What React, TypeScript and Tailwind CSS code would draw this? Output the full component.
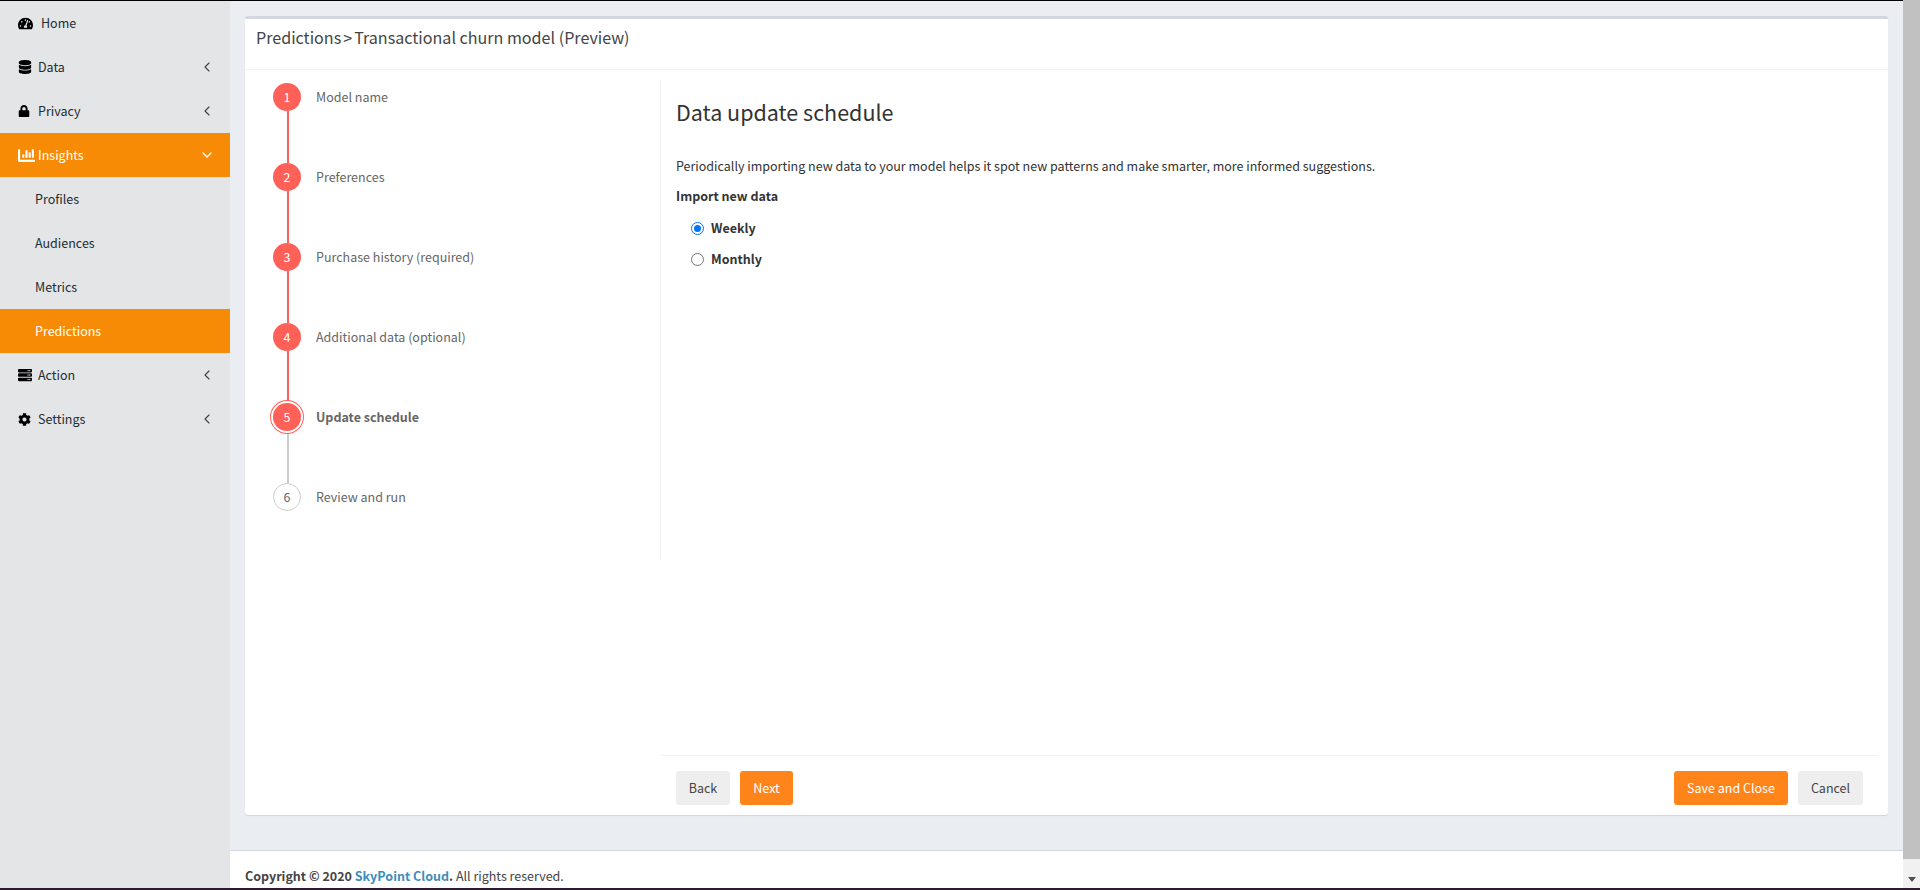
import React from "react";
import { FaTachometerAlt, FaDatabase, FaLock, FaChartBar, FaServer, FaCog } from "react-icons/fa";
import { ChevronLeft, ChevronDown } from "lucide-react";

type NavItem = { label: string; icon?: React.ReactNode; gap?: string; arrow?: "left" | "down"; active?: boolean; sub?: boolean };

const nav: NavItem[] = [
  { label: "Home", icon: <FaTachometerAlt size={15} />, gap: "w-[23px]" },
  { label: "Data", icon: <FaDatabase size={14} />, gap: "w-[20px]", arrow: "left" },
  { label: "Privacy", icon: <FaLock size={12} />, gap: "w-[20px]", arrow: "left" },
  { label: "Insights", icon: <FaChartBar size={17} />, gap: "w-[20px]", arrow: "down", active: true },
  { label: "Profiles", sub: true },
  { label: "Audiences", sub: true },
  { label: "Metrics", sub: true },
  { label: "Predictions", sub: true, active: true },
  { label: "Action", icon: <FaServer size={14} />, gap: "w-[20px]", arrow: "left" },
  { label: "Settings", icon: <FaCog size={13} />, gap: "w-[20px]", arrow: "left" },
];

const steps = ["Model name", "Preferences", "Purchase history (required)", "Additional data (optional)", "Update schedule", "Review and run"];

function Sidebar() {
  return (
    <aside className="w-[230px] shrink-0 bg-[#e4e5e7] text-[12.5px] leading-[20px]">
      {nav.map((n) => (
        <div
          key={n.label}
          className={`h-[44px] flex items-center pr-[15px] ${n.active ? "bg-[#f88b05] text-white" : "text-[#222d32]"} ${n.sub ? "pl-[35px]" : "pl-[18px]"}`}
        >
          {n.icon && (
            <span className={`${n.gap} shrink-0 flex items-center ${n.active ? "text-white" : "text-black"}`}>{n.icon}</span>
          )}
          <span>{n.label}</span>
          {n.arrow === "left" && <ChevronLeft size={16} strokeWidth={1.75} className="ml-auto text-[#444]" />}
          {n.arrow === "down" && <ChevronDown size={16} strokeWidth={2} className="ml-auto text-white" />}
        </div>
      ))}
    </aside>
  );
}

function Stepper() {
  return (
    <div className="w-[416px] h-[480px] shrink-0 mt-[10px] border-r border-[#f0f0f0] pl-[28px] pt-[3px]">
      {steps.map((s, i) => {
        const done = i < 5;
        const current = i === 4;
        return (
          <div key={s}>
            <div className="flex items-center h-[28px] gap-[15px]">
              <span
                className={`w-[28px] h-[28px] rounded-full flex items-center justify-center text-[12.5px] shrink-0 ${
                  done ? "bg-[#ff6159] text-white" : "bg-white border border-[#cccccc] text-[#666]"
                } ${current ? "shadow-[0_0_0_2px_#fff,0_0_0_3px_#ff6159]" : ""}`}
              >
                {i + 1}
              </span>
              <span className={`text-[12.5px] leading-[20px] text-[#666] ${current ? "font-bold" : ""}`}>{s}</span>
            </div>
            {i < 5 && <div className={`w-[2px] h-[52px] ml-[14px] ${i < 4 ? "bg-[#ff6159]" : "bg-[#cccccc]"}`} />}
          </div>
        );
      })}
    </div>
  );
}

function Radio({ label, checked }: { label: string; checked?: boolean }) {
  return (
    <div className="flex items-center h-[20px] pl-[15px] gap-[7px]">
      <span
        className={`w-[13px] h-[13px] rounded-full flex items-center justify-center bg-white border ${
          checked ? "border-[#0075ff]" : "border-[#767676]"
        }`}
      >
        {checked && <span className="w-[7px] h-[7px] rounded-full bg-[#0075ff]" />}
      </span>
      <span className="text-[12.5px] font-bold text-[#333]">{label}</span>
    </div>
  );
}

function Btn({ children, primary, className = "" }: { children: React.ReactNode; primary?: boolean; className?: string }) {
  return (
    <button
      className={`h-[34px] rounded-[3px] text-[12.5px] leading-[20px] flex items-center justify-center ${
        primary ? "bg-[#ff851b] text-white" : "bg-[#eeeeee] text-[#444]"
      } ${className}`}
    >
      {children}
    </button>
  );
}

function Card() {
  return (
    <section className="mx-[15px] mt-[15px] h-[799px] bg-white border-t-[3px] border-[#d2d6de] rounded-[3px] shadow-[0_1px_1px_rgba(0,0,0,0.1)] flex flex-col">
      <header className="h-[51px] shrink-0 border-b border-[#f4f4f4] pl-[11px] pt-[5px] text-[16.1px] leading-[26px] text-[#444]">
        Predictions<span className="mx-[2px]">&gt;</span>Transactional churn model (Preview)
      </header>
      <div className="flex-1 flex min-h-0">
        <Stepper />
        <div className="flex-1 flex flex-col pr-[10px]">
          <div className="flex-1 pl-[15px] text-[#333]">
            <h1 className="mt-[27px] text-[21.5px] leading-[30px] text-[#333]">Data update schedule</h1>
            <p className="mt-[29px] text-[12.5px] leading-[20px]">
              Periodically importing new data to your model helps it spot new patterns and make smarter, more informed suggestions.
            </p>
            <p className="mt-[10px] mb-[12px] text-[12.5px] leading-[20px] font-bold">Import new data</p>
            <div className="flex flex-col gap-[11px]">
              <Radio label="Weekly" checked />
              <Radio label="Monthly" />
            </div>
          </div>
          <footer className="h-[60px] shrink-0 border-t border-[#f0f0f0] flex items-start pt-[15px] pl-[15px] pr-[15px]">
            <Btn className="w-[54px]">Back</Btn>
            <Btn primary className="w-[53px] ml-[10px]">Next</Btn>
            <Btn primary className="w-[114px] ml-auto">Save and Close</Btn>
            <Btn className="w-[65px] ml-[10px]">Cancel</Btn>
          </footer>
        </div>
      </div>
    </section>
  );
}

function Scrollbar() {
  return (
    <div className="w-[17px] shrink-0 bg-[#f1f1f1] flex flex-col items-center">
      <div className="w-full h-[859px] bg-[#c1c1c1]" />
      <div className="flex-1 flex items-end pb-[6px]">
        <span className="w-0 h-0 border-x-[4px] border-x-transparent border-t-[5px] border-t-[#505050]" />
      </div>
    </div>
  );
}

export default function App() {
  return (
    <div className="w-[1920px] h-[890px] overflow-hidden flex flex-col bg-[#eaedf2] font-['Noto_Sans_CJK_SC','Noto_Sans',sans-serif]">
      <div className="flex-1 flex min-h-0">
        <div className="flex-1 flex flex-col min-w-0">
          <div className="h-px bg-black shrink-0" />
          <div className="flex-1 flex min-h-0">
            <Sidebar />
            <main className="flex-1 flex flex-col min-w-0">
              <div className="flex-1">
                <Card />
              </div>
              <div className="h-[38px] shrink-0 bg-white border-t border-[#d2d6de] pl-[15px] pt-[15px] text-[12.5px] leading-[20px] text-[#444]">
                <strong>
                  Copyright © 2020 <span className="text-[#3c8dbc]">SkyPoint Cloud</span>.
                </strong>{" "}
                All rights reserved.
              </div>
            </main>
          </div>
        </div>
        <Scrollbar />
      </div>
      <div className="h-[2px] shrink-0 bg-[#2c1a2e]" />
    </div>
  );
}
